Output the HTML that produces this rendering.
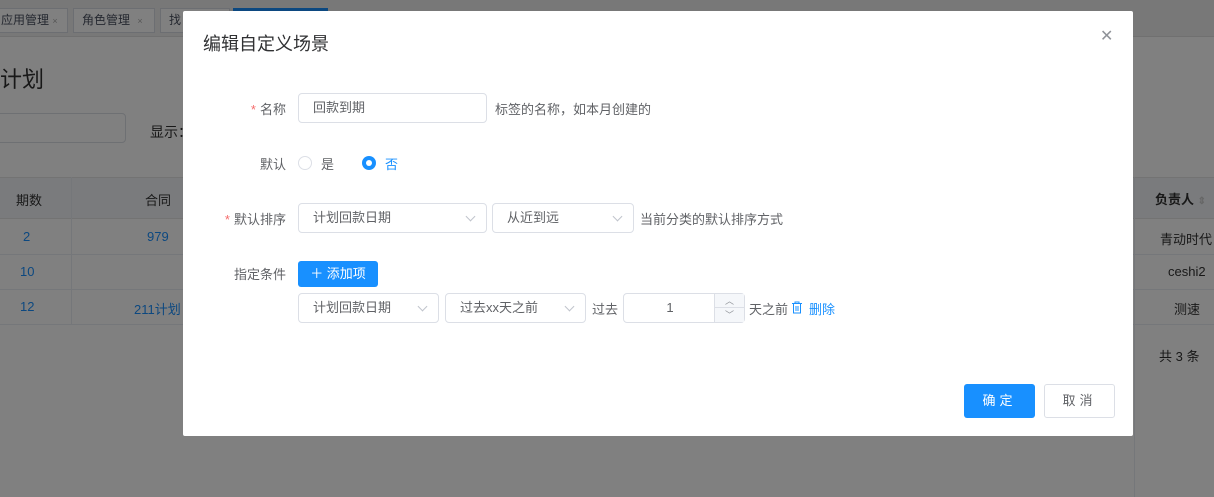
<!DOCTYPE html>
<html><head><meta charset="utf-8"><style>
*{box-sizing:border-box;margin:0;padding:0}
html,body{width:1214px;height:497px;overflow:hidden;background:#808080}
body{position:relative;font-family:"Liberation Sans","Noto Sans CJK SC",sans-serif;font-size:13px;color:#303030}
.abs{position:absolute}
.tab{position:absolute;top:8px;height:25px;border:1px solid #6c6e72;background:#808080;font-size:12px;line-height:23px;color:#252830}
.modal{position:absolute;left:183px;top:11px;width:950px;height:425px;background:#fff;border-radius:2px}
.lbl{position:absolute;width:120px;text-align:right;font-size:13px;color:#606266}
.lbl b{color:#f56c6c;font-weight:normal;margin-right:4px}
.inp{position:absolute;height:30px;border:1px solid #dcdfe6;border-radius:4px;background:#fff;font-size:13px;line-height:28px;padding-left:14px;color:#606266}
.arr{position:absolute;right:12px;top:9px;width:7px;height:7px;border-right:1px solid #c0c4cc;border-bottom:1px solid #c0c4cc;transform:rotate(45deg)}
.txt{position:absolute;font-size:13px;color:#606266}
.dk{color:#181818}
.bl{color:#0c4880}
</style></head><body>
<div class="abs" style="left:0;top:0;width:1214px;height:497px;background:#808080"></div>
<div class="abs" style="left:0;top:0;width:1214px;height:37px;background:#787878;border-bottom:1px solid #707070"></div>
<div class="tab" style="left:-4px;width:72px;padding-left:4px">应用管理 <span style="font-size:9px;color:#555">×</span></div>
<div class="tab" style="left:73px;width:82px;padding-left:8px">角色管理 <span style="font-size:9px;color:#555;margin-left:4px">×</span></div>
<div class="tab" style="left:160px;width:70px;padding-left:8px">找</div>
<div class="abs" style="left:233px;top:8px;width:95px;height:25px;background:#0c4880"></div>
<div class="abs dk" style="left:0;top:62px;font-size:22px">计划</div>
<div class="abs" style="left:-10px;top:113px;width:136px;height:30px;border:1px solid #6e7073;border-radius:4px"></div>
<div class="abs dk" style="left:150px;top:122px;font-size:14px">显示：</div>
<div class="abs" style="left:0;top:177px;width:1214px;height:42px;background:#7a7b7d;border-top:1px solid #737373;border-bottom:1px solid #737373"></div>
<div class="abs" style="left:0;top:254px;width:1214px;height:1px;background:#75777a"></div>
<div class="abs" style="left:0;top:289px;width:1214px;height:1px;background:#75777a"></div>
<div class="abs" style="left:0;top:324px;width:1214px;height:1px;background:#75777a"></div>
<div class="abs" style="left:71px;top:177px;width:1px;height:147px;background:#75777a"></div>
<div class="abs" style="left:1134px;top:177px;width:1px;height:320px;background:#75777a"></div>
<div class="abs dk" style="left:16px;top:190px">期数</div>
<div class="abs dk" style="left:145px;top:190px">合同</div>
<div class="abs bl" style="left:23px;top:229px">2</div>
<div class="abs bl" style="left:147px;top:229px">979</div>
<div class="abs bl" style="left:20px;top:264px">10</div>
<div class="abs bl" style="left:20px;top:299px">12</div>
<div class="abs bl" style="left:134px;top:299px">211计划</div>
<div class="abs dk" style="left:1155px;top:189px;font-weight:bold">负责人 <span style="color:#666;font-size:10px">⇕</span></div>
<div class="abs dk" style="left:1160px;top:229px">青动时代</div>
<div class="abs dk" style="left:1168px;top:264px">ceshi2</div>
<div class="abs dk" style="left:1174px;top:299px">测速</div>
<div class="abs dk" style="left:1159px;top:346px">共 3 条</div>
<div class="modal">
 <div class="abs" style="left:20px;top:19px;font-size:18px;color:#303133">编辑自定义场景</div>
 <div class="abs" style="left:917px;top:15px;font-size:16px;color:#909399;font-weight:300">✕</div>
 <div class="lbl" style="left:-17px;top:88px"><b>*</b>名称</div>
 <div class="inp" style="left:115px;top:82px;width:189px">回款到期</div>
 <div class="txt" style="left:312px;top:88px">标签的名称，如本月创建的</div>
 <div class="lbl" style="left:-17px;top:143px">默认</div>
 <div class="abs" style="left:115px;top:145px;width:14px;height:14px;border:1px solid #dcdfe6;border-radius:50%"></div>
 <div class="txt" style="left:138px;top:143px">是</div>
 <div class="abs" style="left:179px;top:145px;width:14px;height:14px;background:#1890ff;border-radius:50%"><div style="position:absolute;left:4px;top:4px;width:6px;height:6px;background:#fff;border-radius:50%"></div></div>
 <div class="txt" style="left:202px;top:143px;color:#1890ff">否</div>
 <div class="lbl" style="left:-17px;top:198px"><b>*</b>默认排序</div>
 <div class="inp" style="left:115px;top:192px;width:189px">计划回款日期<i class="arr"></i></div>
 <div class="inp" style="left:309px;top:192px;width:142px">从近到远<i class="arr"></i></div>
 <div class="txt" style="left:457px;top:198px">当前分类的默认排序方式</div>
 <div class="lbl" style="left:-17px;top:253px">指定条件</div>
 <div class="abs" style="left:115px;top:250px;width:80px;height:26px;background:#1890ff;border-radius:3px;color:#fff;line-height:26px;text-align:center;font-size:13px">＋ 添加项</div>
 <div class="inp" style="left:115px;top:282px;width:141px">计划回款日期<i class="arr"></i></div>
 <div class="inp" style="left:262px;top:282px;width:141px">过去xx天之前<i class="arr"></i></div>
 <div class="txt" style="left:409px;top:288px">过去</div>
 <div class="inp" style="left:440px;top:282px;width:122px;padding:0;text-align:center"><span style="position:absolute;left:0;width:92px;text-align:center">1</span>
  <div style="position:absolute;right:0;top:0;width:30px;height:28px;border-left:1px solid #dcdfe6;background:#f5f7fa;font-size:9px;line-height:14px;color:#909399"><div style="border-bottom:1px solid #dcdfe6;height:14px">︿</div><div>﹀</div></div></div>
 <div class="txt" style="left:566px;top:288px">天之前</div>
 <svg class="abs" style="left:608px;top:290px" width="12" height="13" viewBox="0 0 12 13"><path d="M1 2.5h10M4 2.5V1h4v1.5M2.5 2.5v9.5h7V2.5M5 5v5M7 5v5" fill="none" stroke="#1890ff" stroke-width="1"/></svg>
 <div class="txt" style="left:626px;top:288px;color:#1890ff">删除</div>
 <div class="abs" style="left:781px;top:373px;width:71px;height:34px;background:#1890ff;border-radius:3px;color:#fff;text-align:center;line-height:34px;font-size:13px;letter-spacing:4px">确定</div>
 <div class="abs" style="left:861px;top:373px;width:71px;height:34px;border:1px solid #dcdfe6;border-radius:3px;color:#606266;text-align:center;line-height:32px;font-size:13px;letter-spacing:4px">取消</div>
</div>
</body></html>
